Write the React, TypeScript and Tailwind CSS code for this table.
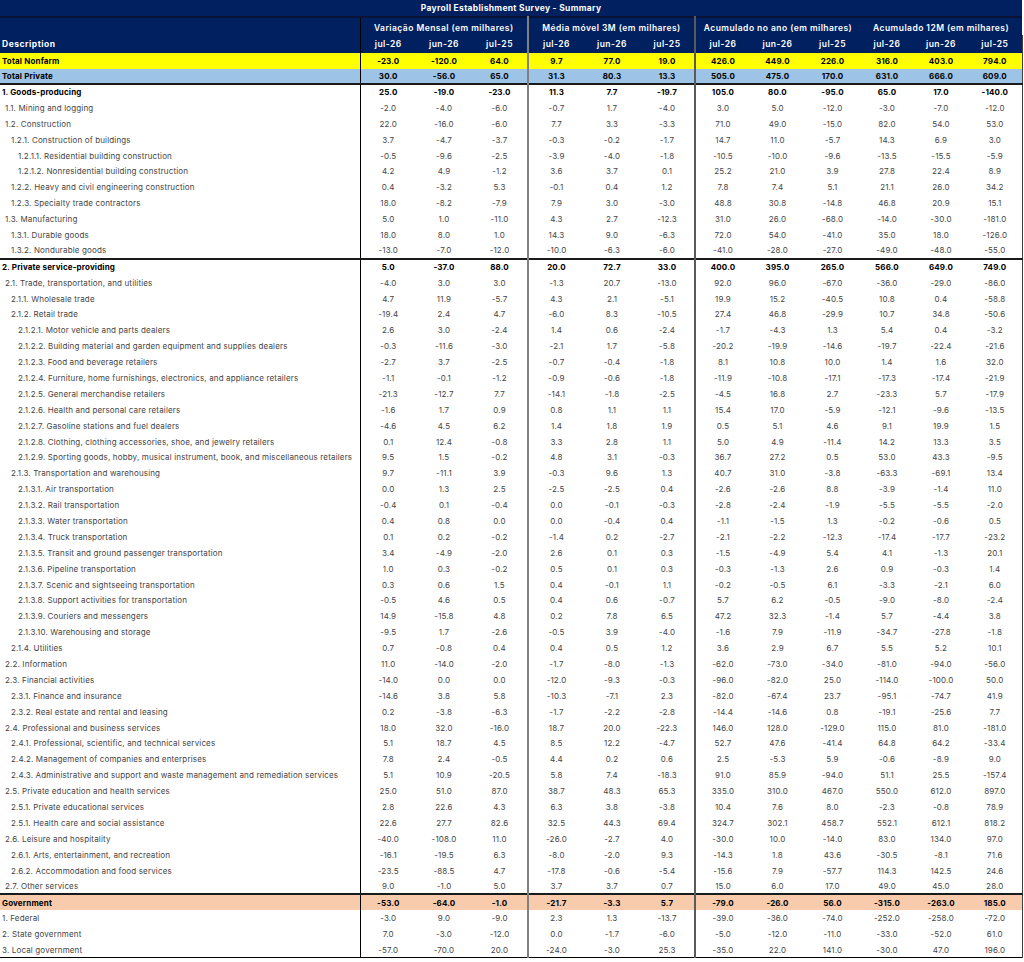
import React from "react";

type Kind = "nonfarm" | "private" | "bold" | "gov" | "normal";

interface Row {
  label: string;
  values: string;
  kind?: Kind;
  rule?: boolean;
}

const rows: Row[] = [
  { label: "Total Nonfarm", values: "-23.0 -120.0 64.0 9.7 77.0 19.0 426.0 449.0 226.0 316.0 403.0 794.0", kind: "nonfarm" },
  { label: "Total Private", values: "30.0 -56.0 65.0 31.3 80.3 13.3 505.0 475.0 170.0 631.0 666.0 609.0", kind: "private" },
  { label: "1. Goods-producing", values: "25.0 -19.0 -23.0 11.3 7.7 -19.7 105.0 80.0 -95.0 65.0 17.0 -140.0", kind: "bold" },
  { label: "1.1. Mining and logging", values: "-2.0 -4.0 -6.0 -0.7 1.7 -4.0 3.0 5.0 -12.0 -3.0 -7.0 -12.0" },
  { label: "1.2. Construction", values: "22.0 -16.0 -6.0 7.7 3.3 -3.3 71.0 49.0 -15.0 82.0 54.0 53.0" },
  { label: "1.2.1. Construction of buildings", values: "3.7 -4.7 -3.7 -0.3 -0.2 -1.7 14.7 11.0 -5.7 14.3 6.9 3.0" },
  { label: "1.2.1.1. Residential building construction", values: "-0.5 -9.6 -2.5 -3.9 -4.0 -1.8 -10.5 -10.0 -9.6 -13.5 -15.5 -5.9" },
  { label: "1.2.1.2. Nonresidential building construction", values: "4.2 4.9 -1.2 3.6 3.7 0.1 25.2 21.0 3.9 27.8 22.4 8.9" },
  { label: "1.2.2. Heavy and civil engineering construction", values: "0.4 -3.2 5.3 -0.1 0.4 1.2 7.8 7.4 5.1 21.1 26.0 34.2" },
  { label: "1.2.3. Specialty trade contractors", values: "18.0 -8.2 -7.9 7.9 3.0 -3.0 48.8 30.8 -14.8 46.8 20.9 15.1" },
  { label: "1.3. Manufacturing", values: "5.0 1.0 -11.0 4.3 2.7 -12.3 31.0 26.0 -68.0 -14.0 -30.0 -181.0" },
  { label: "1.3.1. Durable goods", values: "18.0 8.0 1.0 14.3 9.0 -6.3 72.0 54.0 -41.0 35.0 18.0 -126.0" },
  { label: "1.3.2. Nondurable goods", values: "-13.0 -7.0 -12.0 -10.0 -6.3 -6.0 -41.0 -28.0 -27.0 -49.0 -48.0 -55.0" },
  { label: "2. Private service-providing", values: "5.0 -37.0 88.0 20.0 72.7 33.0 400.0 395.0 265.0 566.0 649.0 749.0", kind: "bold", rule: true },
  { label: "2.1. Trade, transportation, and utilities", values: "-4.0 3.0 3.0 -1.3 20.7 -13.0 92.0 96.0 -67.0 -36.0 -29.0 -86.0" },
  { label: "2.1.1. Wholesale trade", values: "4.7 11.9 -5.7 4.3 2.1 -5.1 19.9 15.2 -40.5 10.8 0.4 -58.8" },
  { label: "2.1.2. Retail trade", values: "-19.4 2.4 4.7 -6.0 8.3 -10.5 27.4 46.8 -29.9 10.7 34.8 -50.6" },
  { label: "2.1.2.1. Motor vehicle and parts dealers", values: "2.6 3.0 -2.4 1.4 0.6 -2.4 -1.7 -4.3 1.3 5.4 0.4 -3.2" },
  { label: "2.1.2.2. Building material and garden equipment and supplies dealers", values: "-0.3 -11.6 -3.0 -2.1 1.7 -5.8 -20.2 -19.9 -14.6 -19.7 -22.4 -21.6" },
  { label: "2.1.2.3. Food and beverage retailers", values: "-2.7 3.7 -2.5 -0.7 -0.4 -1.8 8.1 10.8 10.0 1.4 1.6 32.0" },
  { label: "2.1.2.4. Furniture, home furnishings, electronics, and appliance retailers", values: "-1.1 -0.1 -1.2 -0.9 -0.6 -1.8 -11.9 -10.8 -17.1 -17.3 -17.4 -21.9" },
  { label: "2.1.2.5. General merchandise retailers", values: "-21.3 -12.7 7.7 -14.1 -1.8 -2.5 -4.5 16.8 2.7 -23.3 5.7 -17.9" },
  { label: "2.1.2.6. Health and personal care retailers", values: "-1.6 1.7 0.9 0.8 1.1 1.1 15.4 17.0 -5.9 -12.1 -9.6 -13.5" },
  { label: "2.1.2.7. Gasoline stations and fuel dealers", values: "-4.6 4.5 6.2 1.4 1.8 1.9 0.5 5.1 4.6 9.1 19.9 1.5" },
  { label: "2.1.2.8. Clothing, clothing accessories, shoe, and jewelry retailers", values: "0.1 12.4 -0.8 3.3 2.8 1.1 5.0 4.9 -11.4 14.2 13.3 3.5" },
  { label: "2.1.2.9. Sporting goods, hobby, musical instrument, book, and miscellaneous retailers", values: "9.5 1.5 -0.2 4.8 3.1 -0.3 36.7 27.2 0.5 53.0 43.3 -9.5" },
  { label: "2.1.3. Transportation and warehousing", values: "9.7 -11.1 3.9 -0.3 9.6 1.3 40.7 31.0 -3.8 -63.3 -69.1 13.4" },
  { label: "2.1.3.1. Air transportation", values: "0.0 1.3 2.5 -2.5 -2.5 0.4 -2.6 -2.6 8.8 -3.9 -1.4 11.0" },
  { label: "2.1.3.2. Rail transportation", values: "-0.4 0.1 -0.4 0.0 -0.1 -0.3 -2.8 -2.4 -1.9 -5.5 -5.5 -2.0" },
  { label: "2.1.3.3. Water transportation", values: "0.4 0.8 0.0 0.0 -0.4 0.4 -1.1 -1.5 1.3 -0.2 -0.6 0.5" },
  { label: "2.1.3.4. Truck transportation", values: "0.1 0.2 -0.2 -1.4 0.2 -2.7 -2.1 -2.2 -12.3 -17.4 -17.7 -23.2" },
  { label: "2.1.3.5. Transit and ground passenger transportation", values: "3.4 -4.9 -2.0 2.6 0.1 0.3 -1.5 -4.9 5.4 4.1 -1.3 20.1" },
  { label: "2.1.3.6. Pipeline transportation", values: "1.0 0.3 -0.2 0.5 0.1 0.3 -0.3 -1.3 2.6 0.9 -0.3 1.4" },
  { label: "2.1.3.7. Scenic and sightseeing transportation", values: "0.3 0.6 1.5 0.4 -0.1 1.1 -0.2 -0.5 6.1 -3.3 -2.1 6.0" },
  { label: "2.1.3.8. Support activities for transportation", values: "-0.5 4.6 0.5 0.4 0.6 -0.7 5.7 6.2 -0.5 -9.0 -8.0 -2.4" },
  { label: "2.1.3.9. Couriers and messengers", values: "14.9 -15.8 4.8 0.2 7.8 6.5 47.2 32.3 -1.4 5.7 -4.4 3.8" },
  { label: "2.1.3.10. Warehousing and storage", values: "-9.5 1.7 -2.6 -0.5 3.9 -4.0 -1.6 7.9 -11.9 -34.7 -27.8 -1.8" },
  { label: "2.1.4. Utilities", values: "0.7 -0.8 0.4 0.4 0.5 1.2 3.6 2.9 6.7 5.5 5.2 10.1" },
  { label: "2.2. Information", values: "11.0 -14.0 -2.0 -1.7 -8.0 -1.3 -62.0 -73.0 -34.0 -81.0 -94.0 -56.0" },
  { label: "2.3. Financial activities", values: "-14.0 0.0 0.0 -12.0 -9.3 -0.3 -96.0 -82.0 25.0 -114.0 -100.0 50.0" },
  { label: "2.3.1. Finance and insurance", values: "-14.6 3.8 5.8 -10.3 -7.1 2.3 -82.0 -67.4 23.7 -95.1 -74.7 41.9" },
  { label: "2.3.2. Real estate and rental and leasing", values: "0.2 -3.8 -6.3 -1.7 -2.2 -2.8 -14.4 -14.6 0.8 -19.1 -25.6 7.7" },
  { label: "2.4. Professional and business services", values: "18.0 32.0 -16.0 18.7 20.0 -22.3 146.0 128.0 -129.0 115.0 81.0 -181.0" },
  { label: "2.4.1. Professional, scientific, and technical services", values: "5.1 18.7 4.5 8.5 12.2 -4.7 52.7 47.6 -41.4 64.8 64.2 -33.4" },
  { label: "2.4.2. Management of companies and enterprises", values: "7.8 2.4 -0.5 4.4 0.2 0.6 2.5 -5.3 5.9 -0.6 -8.9 9.0" },
  { label: "2.4.3. Administrative and support and waste management and remediation services", values: "5.1 10.9 -20.5 5.8 7.4 -18.3 91.0 85.9 -94.0 51.1 25.5 -157.4" },
  { label: "2.5. Private education and health services", values: "25.0 51.0 87.0 38.7 48.3 65.3 335.0 310.0 467.0 550.0 612.0 897.0" },
  { label: "2.5.1. Private educational services", values: "2.8 22.6 4.3 6.3 3.8 -3.8 10.4 7.6 8.0 -2.3 -0.8 78.9" },
  { label: "2.5.1. Health care and social assistance", values: "22.6 27.7 82.6 32.5 44.3 69.4 324.7 302.1 458.7 552.1 612.1 818.2" },
  { label: "2.6. Leisure and hospitality", values: "-40.0 -108.0 11.0 -26.0 -2.7 4.0 -30.0 10.0 -14.0 83.0 134.0 97.0" },
  { label: "2.6.1. Arts, entertainment, and recreation", values: "-16.1 -19.5 6.3 -8.0 -2.0 9.3 -14.3 1.8 43.6 -30.5 -8.1 71.6" },
  { label: "2.6.2. Accommodation and food services", values: "-23.5 -88.5 4.7 -17.8 -0.6 -5.4 -15.6 7.9 -57.7 114.3 142.5 24.6" },
  { label: "2.7. Other services", values: "9.0 -1.0 5.0 3.7 3.7 0.7 15.0 6.0 17.0 49.0 45.0 28.0" },
  { label: "Government", values: "-53.0 -64.0 -1.0 -21.7 -3.3 5.7 -79.0 -26.0 56.0 -315.0 -263.0 185.0", kind: "gov", rule: true },
  { label: "1. Federal", values: "-3.0 9.0 -9.0 2.3 1.3 -13.7 -39.0 -36.0 -74.0 -252.0 -258.0 -72.0" },
  { label: "2. State government", values: "7.0 -3.0 -12.0 0.0 -1.7 -6.0 -5.0 -12.0 -11.0 -33.0 -52.0 61.0" },
  { label: "3. Local government", values: "-57.0 -70.0 20.0 -24.0 -3.0 25.3 -35.0 22.0 141.0 -30.0 47.0 196.0" },
];

const groups = [
  "Variação Mensal (em milhares)",
  "Média móvel 3M (em milhares)",
  "Acumulado no ano (em milhares)",
  "Acumulado 12M (em milhares)",
];

const periods = ["jul-26", "jun-26", "jul-25"];

const widths = [360, 56, 56, 56, 56, 56, 55, 55, 55, 55, 54, 54, 54];

// vertical rules between the column groups (none between the last two)
function edge(i: number) {
  if (i === 0) return "border-l border-black";
  if (i === 3) return "border-l-2 border-l-[#808080]";
  if (i === 6) return "border-l-2 border-l-[#5a5a5a]";
  if (i === 11) return "border-r border-r-[#404040]";
  return "";
}

const indent = ["pl-[2px]", "pl-[2px]", "pl-[5px]", "pl-[11px]", "pl-[18px]"];

function level(label: string) {
  const m = label.match(/^(\d+(?:\.\d+)*)\./);
  return m ? m[1].split(".").length : 1;
}

const rowStyles: Record<Kind, string> = {
  nonfarm: "bg-[#ffff00] font-bold text-black h-[16px]",
  private: "bg-[#9dc3e6] font-bold text-black h-[15px] border-b-2 border-b-[#1a1a1a]",
  bold: "font-bold text-black h-[15.9px]",
  gov: "bg-[#f8cbad] font-bold text-black h-[15.9px]",
  normal: "text-[#454545] h-[15.9px]",
};

export default function App() {
  return (
    <div className="bg-white w-[1024px] min-h-[962px] font-['Inter',sans-serif]">
      <table className="table-fixed border-collapse w-[1022px] text-[8px] tracking-[0.15px] leading-none">
        <colgroup>
          {widths.map((w, i) => (
            <col key={i} style={{ width: w }} />
          ))}
        </colgroup>
        <thead className="bg-[#002060] text-white">
          <tr className="h-[17px] border-b-2 border-b-[#0a1236]">
            <th colSpan={13} className="p-0 text-center text-[8.5px] font-bold tracking-[0.3px]">
              Payroll Establishment Survey - Summary
            </th>
          </tr>
          <tr className="h-[18px]">
            <th className="p-0" />
            {groups.map((g, i) => (
              <th
                key={g}
                colSpan={3}
                className={`p-0 text-center text-[8.5px] tracking-[0.45px] font-semibold pt-[3px] ${edge(i * 3)}`}
              >
                {g}
              </th>
            ))}
          </tr>
          <tr className="h-[18px]">
            <th className="p-0 pl-[2px] text-left text-[8.5px] tracking-[0.5px] font-bold">Description</th>
            {groups.flatMap((g, gi) =>
              periods.map((p, pi) => (
                <th
                  key={g + p}
                  className={`p-0 text-center text-[8.5px] tracking-[0.5px] font-semibold ${edge(gi * 3 + pi)}`}
                >
                  {p}
                </th>
              ))
            )}
          </tr>
        </thead>
        <tbody>
          {rows.map((r, ri) => {
            const kind = r.kind ?? "normal";
            const last = ri === rows.length - 1;
            return (
              <tr
                key={ri}
                className={`${rowStyles[kind]} ${r.rule ? "border-t-2 border-t-[#1a1a1a]" : ""} ${
                  last ? "border-b border-b-black" : ""
                }`}
              >
                <td className={`p-0 whitespace-nowrap overflow-hidden ${indent[level(r.label)]}`}>
                  {r.label}
                </td>
                {r.values.split(" ").map((v, i) => (
                  <td key={i} className={`p-0 text-center ${edge(i)}`}>
                    {v}
                  </td>
                ))}
              </tr>
            );
          })}
        </tbody>
      </table>
    </div>
  );
}
